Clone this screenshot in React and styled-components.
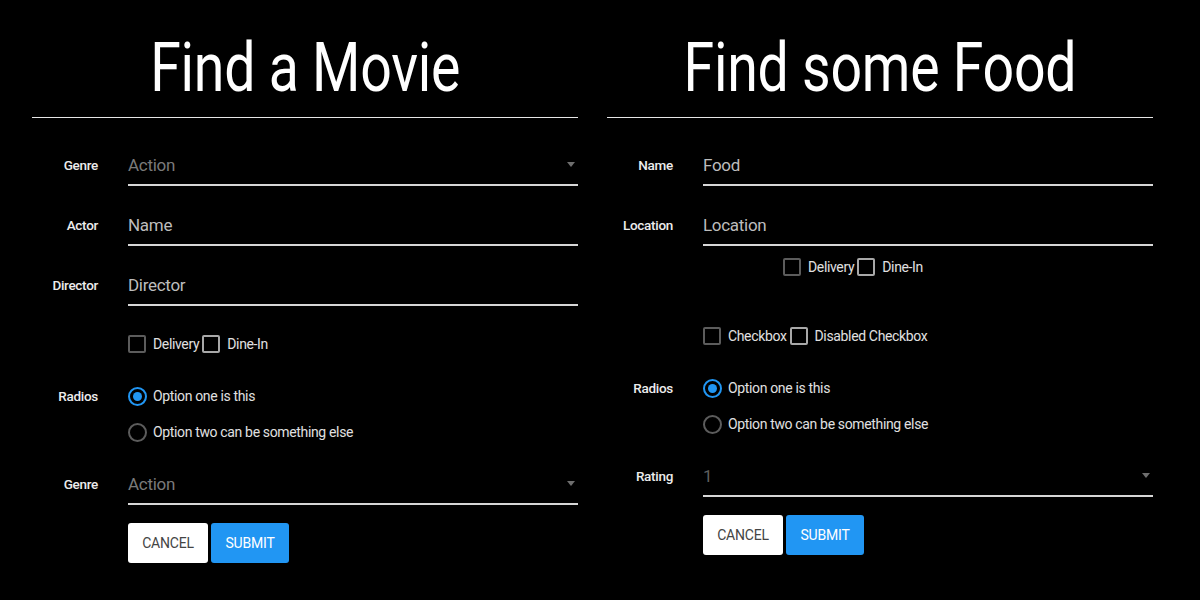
import React from "react";
import styled, { createGlobalStyle } from "styled-components";

const GlobalStyle = createGlobalStyle`
  html, body {
    margin: 0;
    background: #000;
    font-family: Roboto, "Liberation Sans", sans-serif;
  }
`;

const App = () => {
  return (
    <>
      <GlobalStyle />
      <Page>
        <Panel>
          <Title>
            <TitleText>Find a Movie</TitleText>
          </Title>
          <Form>
            <Row>
              <Label>Genre</Label>
              <Select value="Action" />
            </Row>
            <Row $mt={19}>
              <Label>Actor</Label>
              <Input>Name</Input>
            </Row>
            <Row $mt={19}>
              <Label>Director</Label>
              <Input>Director</Input>
            </Row>
            <Row $mt={28}>
              <span />
              <Checks>
                <Check label="Delivery" />
                <Check label="Dine-In" light />
              </Checks>
            </Row>
            <Row $mt={32}>
              <Label $lh={20}>Radios</Label>
              <Radios />
            </Row>
            <Row $mt={22}>
              <Label>Genre</Label>
              <Select value="Action" />
            </Row>
            <Row $mt={18}>
              <span />
              <Buttons />
            </Row>
          </Form>
        </Panel>

        <Panel>
          <Title>
            <TitleText>Find some Food</TitleText>
          </Title>
          <Form>
            <Row>
              <Label>Name</Label>
              <Input>Food</Input>
            </Row>
            <Row $mt={19}>
              <Label>Location</Label>
              <Input>Location</Input>
            </Row>
            <Row $mt={11}>
              <span />
              <Checks $indent={80}>
                <Check label="Delivery" />
                <Check label="Dine-In" light />
              </Checks>
            </Row>
            <Row $mt={49}>
              <span />
              <Checks>
                <Check label="Checkbox" />
                <Check label="Disabled Checkbox" light />
              </Checks>
            </Row>
            <Row $mt={32}>
              <Label $lh={20}>Radios</Label>
              <Radios />
            </Row>
            <Row $mt={22}>
              <Label>Rating</Label>
              <Select value="1" dim />
            </Row>
            <Row $mt={18}>
              <span />
              <Buttons />
            </Row>
          </Form>
        </Panel>
      </Page>
    </>
  );
};

const Select = ({ value, dim }) => (
  <Field>
    <FieldText $color={dim ? "#5f5f5f" : "#7a7a7a"}>{value}</FieldText>
    <Caret />
  </Field>
);

const Input = ({ children }) => (
  <Field>
    <FieldText $color="#bdbdbd">{children}</FieldText>
  </Field>
);

const Check = ({ label, light }) => (
  <CheckItem>
    <Box $light={light} />
    <CheckText>{label}</CheckText>
  </CheckItem>
);

const Radios = () => (
  <RadioList>
    <RadioItem>
      <Circle $on />
      <CheckText>Option one is this</CheckText>
    </RadioItem>
    <RadioItem>
      <Circle />
      <CheckText>Option two can be something else</CheckText>
    </RadioItem>
  </RadioList>
);

const Buttons = () => (
  <ButtonRow>
    <Button>CANCEL</Button>
    <Button $primary>SUBMIT</Button>
  </ButtonRow>
);

const Page = styled.div`
  display: flex;
  gap: 29px;
  padding: 0 32px;
  width: 1200px;
  height: 600px;
  box-sizing: border-box;
  overflow: hidden;
`;

const Panel = styled.section`
  width: 546px;
  display: flex;
  flex-direction: column;
`;

const Title = styled.h1`
  margin: 0;
  height: 118px;
  box-sizing: border-box;
  padding-top: 28px;
  border-bottom: 1.5px solid #e6e6e6;
  color: #fff;
  font-size: 68px;
  font-weight: 400;
  line-height: 80px;
  text-align: center;
`;

const TitleText = styled.span`
  display: inline-block;
  transform: scaleX(0.815);
  letter-spacing: -0.3px;
`;

const Form = styled.div`
  display: flex;
  flex-direction: column;
  padding-top: 27px;
`;

const Row = styled.div`
  display: grid;
  grid-template-columns: 66px 1fr;
  column-gap: 30px;
  align-items: start;
  margin-top: ${(p) => p.$mt || 0}px;
`;

const Label = styled.label`
  color: #ececec;
  font-size: 13.5px;
  font-weight: 500;
  text-align: right;
  line-height: ${(p) => p.$lh || 40}px;
  letter-spacing: -0.3px;
  white-space: nowrap;
`;

const Field = styled.div`
  height: 41px;
  box-sizing: border-box;
  border-bottom: 2px solid #d6d6d6;
  display: flex;
  align-items: center;
  justify-content: space-between;
  padding-right: 3px;
`;

const FieldText = styled.span`
  color: ${(p) => p.$color};
  font-size: 17px;
  letter-spacing: -0.3px;
  margin-top: 1px;
`;

const Caret = styled.span`
  width: 0;
  height: 0;
  border-left: 4.5px solid transparent;
  border-right: 4.5px solid transparent;
  border-top: 5px solid #6e6e6e;
`;

const Checks = styled.div`
  display: flex;
  align-items: center;
  gap: 3px;
  margin-left: ${(p) => p.$indent || 0}px;
`;

const CheckItem = styled.div`
  display: flex;
  align-items: center;
  gap: 7px;
  height: 20px;
`;

const Box = styled.span`
  width: 18px;
  height: 18px;
  box-sizing: border-box;
  border: 2px solid ${(p) => (p.$light ? "#a8a8a8" : "#5c5c5c")};
  border-radius: 2px;
`;

const CheckText = styled.span`
  color: #e0e0e0;
  font-size: 14px;
  letter-spacing: -0.35px;
`;

const RadioList = styled.div`
  display: flex;
  flex-direction: column;
  gap: 16px;
`;

const RadioItem = styled.div`
  display: flex;
  align-items: center;
  gap: 6px;
  height: 20px;
`;

const Circle = styled.span`
  width: 19px;
  height: 19px;
  box-sizing: border-box;
  border-radius: 50%;
  border: 2px solid ${(p) => (p.$on ? "#2196f3" : "#5c5c5c")};
  display: flex;
  align-items: center;
  justify-content: center;

  &::after {
    content: "";
    display: ${(p) => (p.$on ? "block" : "none")};
    width: 9px;
    height: 9px;
    border-radius: 50%;
    background: #2196f3;
  }
`;

const ButtonRow = styled.div`
  display: flex;
  gap: 3px;
`;

const Button = styled.button`
  height: 40px;
  width: ${(p) => (p.$primary ? 78 : 80)}px;
  border: none;
  border-radius: 3px;
  background: ${(p) => (p.$primary ? "#2196f3" : "#fff")};
  color: ${(p) => (p.$primary ? "#fff" : "#444")};
  font-family: Roboto, "Liberation Sans", sans-serif;
  font-size: 14px;
  letter-spacing: -0.2px;
  padding: 0;
`;

export default App;
